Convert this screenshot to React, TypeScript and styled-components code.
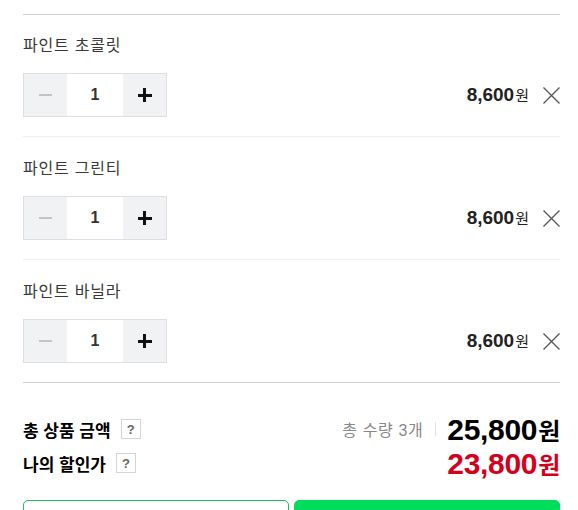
import React from 'react';
import styled, { createGlobalStyle } from 'styled-components';

interface CartItem {
  id: number;
  name: string;
  price: number;
  qty: number;
}

const initialItems: CartItem[] = [
  { id: 1, name: '파인트 초콜릿', price: 8600, qty: 1 },
  { id: 2, name: '파인트 그린티', price: 8600, qty: 1 },
  { id: 3, name: '파인트 바닐라', price: 8600, qty: 1 },
];

const won = (n: number) => n.toLocaleString('ko-KR');

const CloseIcon = () => (
  <svg width="19" height="19" viewBox="0 0 19 19" fill="none">
    <path d="M1.5 1.5 L17.5 17.5 M17.5 1.5 L1.5 17.5" stroke="#555" strokeWidth="1.3" />
  </svg>
);

const App = () => {
  const [items, setItems] = React.useState<CartItem[]>(initialItems);

  const changeQty = (id: number, delta: number) => {
    setItems(items.map(item =>
      item.id === id ? { ...item, qty: Math.max(1, item.qty + delta) } : item));
  };

  const removeItem = (id: number) => setItems(items.filter(item => item.id !== id));

  const totalQty = items.reduce((sum, item) => sum + item.qty, 0);
  const totalPrice = items.reduce((sum, item) => sum + item.qty * item.price, 0);
  const discounted = Math.max(0, totalPrice - 2000);

  return (
    <Wrapper>
      <GlobalStyle />
      <ItemList>
        {items.map(item => (
          <Item key={item.id}>
            <ItemName>{item.name}</ItemName>
            <ItemRow>
              <Stepper>
                <StepButton disabled={item.qty <= 1} onClick={() => changeQty(item.id, -1)}>
                  <Minus />
                </StepButton>
                <Count>{item.qty}</Count>
                <StepButton onClick={() => changeQty(item.id, 1)}>
                  <Plus />
                </StepButton>
              </Stepper>
              <PriceArea>
                <Price>
                  {won(item.price * item.qty)}
                  <Unit>원</Unit>
                </Price>
                <RemoveButton aria-label="삭제" onClick={() => removeItem(item.id)}>
                  <CloseIcon />
                </RemoveButton>
              </PriceArea>
            </ItemRow>
          </Item>
        ))}
      </ItemList>

      <Summary>
        <SummaryRow>
          <Label>
            총 상품 금액
            <Help>?</Help>
          </Label>
          <TotalRight>
            <Quantity>총 수량 {totalQty}개</Quantity>
            <Bar />
            <Amount>
              {won(totalPrice)}
              <AmountUnit>원</AmountUnit>
            </Amount>
          </TotalRight>
        </SummaryRow>
        <SummaryRow>
          <Label>
            나의 할인가
            <Help>?</Help>
          </Label>
          <Amount isDiscount>
            {won(discounted)}
            <AmountUnit>원</AmountUnit>
          </Amount>
        </SummaryRow>
      </Summary>

      <Actions>
        <ActionButton>장바구니</ActionButton>
        <ActionButton primary>구매하기</ActionButton>
      </Actions>
    </Wrapper>
  );
};

const GlobalStyle = createGlobalStyle`
  body {
    margin: 0;
    background: #fff;
    font-family: "Liberation Sans", "Noto Sans CJK KR", sans-serif;
  }
`;

const Wrapper = styled.div`
  padding: 14px 18px 0 23px;
  width: 537px;
`;

const ItemList = styled.div`
  border-top: 1px solid #cfcfcf;
  border-bottom: 1px solid #cfcfcf;
`;

const Item = styled.div`
  padding: 21px 0 19px;

  & + & {
    border-top: 1px solid #eeeeee;
    padding-top: 22px;
  }
`;

const ItemName = styled.div`
  color: #383838;
  font-size: 16px;
  letter-spacing: 0.8px;
  line-height: 20px;
`;

const ItemRow = styled.div`
  align-items: center;
  display: flex;
  justify-content: space-between;
  margin-top: 17px;
`;

const Stepper = styled.div`
  border: 1px solid #dcdee2;
  box-sizing: border-box;
  display: flex;
  height: 44px;
  width: 144px;
`;

const StepButton = styled.button`
  align-items: center;
  background: #f1f2f4;
  border: none;
  color: #111;
  cursor: pointer;
  display: flex;
  justify-content: center;
  padding: 0;
  width: 43px;

  &:disabled {
    color: #c4c4c4;
    cursor: default;
  }
`;

const Minus = styled.span`
  background: currentColor;
  display: block;
  height: 2px;
  width: 13px;
`;

const Plus = styled.span`
  display: block;
  height: 14px;
  position: relative;
  width: 14px;

  &::before,
  &::after {
    background: currentColor;
    content: '';
    position: absolute;
  }

  &::before {
    height: 3px;
    left: 0;
    top: 5.5px;
    width: 14px;
  }

  &::after {
    height: 14px;
    left: 5.5px;
    top: 0;
    width: 3px;
  }
`;

const Count = styled.div`
  align-items: center;
  background: #fff;
  color: #333;
  display: flex;
  flex: 1;
  font-size: 16px;
  font-weight: bold;
  justify-content: center;
`;

const PriceArea = styled.div`
  align-items: center;
  display: flex;
  gap: 13px;
`;

const Price = styled.span`
  color: #222;
  font-size: 19px;
  font-weight: bold;
`;

const Unit = styled.span`
  font-size: 15px;
  font-weight: normal;
  margin-left: 1px;
`;

const RemoveButton = styled.button`
  background: none;
  border: none;
  cursor: pointer;
  display: flex;
  margin-right: -1px;
  padding: 0;
`;

const Summary = styled.div`
  display: flex;
  flex-direction: column;
  padding-top: 29px;
`;

const SummaryRow = styled.div`
  align-items: center;
  display: flex;
  height: 34px;
  justify-content: space-between;
`;

const Label = styled.div`
  align-items: center;
  color: #000;
  display: flex;
  font-size: 17px;
  font-weight: bold;
  gap: 10px;
`;

const Help = styled.span`
  align-items: center;
  border: 1px solid #d4d4d4;
  box-sizing: border-box;
  color: #666;
  display: inline-flex;
  font-size: 13px;
  font-weight: bold;
  height: 20px;
  justify-content: center;
  width: 20px;
`;

const TotalRight = styled.div`
  align-items: center;
  display: flex;
`;

const Quantity = styled.span`
  color: #888;
  font-size: 16px;
  letter-spacing: 0.6px;
`;

const Bar = styled.span`
  background: #e2e2e2;
  height: 14px;
  margin: 0 11px 0 12px;
  width: 1px;
`;

const Amount = styled.span<{ isDiscount?: boolean }>`
  color: ${props => props.isDiscount ? '#d3001c' : '#000'};
  font-size: 30px;
  font-weight: bold;
  letter-spacing: -0.3px;
`;

const AmountUnit = styled.span`
  font-size: 24px;
  margin-left: 1px;
`;

const Actions = styled.div`
  display: flex;
  gap: 5px;
  margin-top: 20px;
`;

const ActionButton = styled.button<{ primary?: boolean }>`
  background: ${props => props.primary ? '#00dd5a' : '#fff'};
  border: 1px solid ${props => props.primary ? '#00dd5a' : '#1fbf5e'};
  border-radius: 5px;
  color: ${props => props.primary ? '#fff' : '#1fbf5e'};
  cursor: pointer;
  flex: 1;
  font-family: inherit;
  font-size: 17px;
  font-weight: bold;
  height: 60px;
  line-height: 18px;
`;

export default App;
